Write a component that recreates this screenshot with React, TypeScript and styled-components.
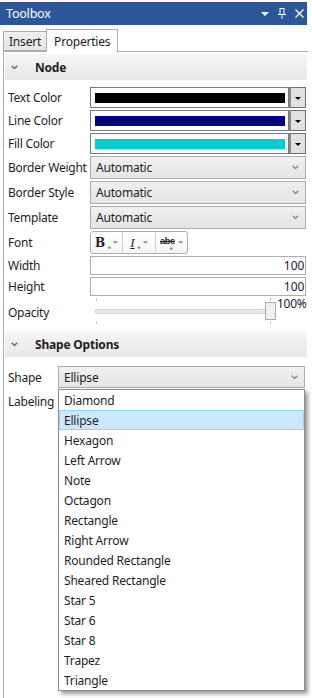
import React from "react";
import styled, { createGlobalStyle } from "styled-components";

const shapes = [
  "Diamond",
  "Ellipse",
  "Hexagon",
  "Left Arrow",
  "Note",
  "Octagon",
  "Rectangle",
  "Right Arrow",
  "Rounded Rectangle",
  "Sheared Rectangle",
  "Star 5",
  "Star 6",
  "Star 8",
  "Trapez",
  "Triangle",
];

const Chevron = ({ color = "#666" }: { color?: string }) => (
  <svg width="7" height="5" viewBox="0 0 7 5">
    <polyline points="0.8,0.8 3.5,3.6 6.2,0.8" fill="none" stroke={color} strokeWidth="1.4" />
  </svg>
);

const DownTriangle = ({ color = "#000", w = 7, h = 4 }: { color?: string; w?: number; h?: number }) => (
  <svg width={w} height={h} viewBox={`0 0 ${w} ${h}`}>
    <polygon points={`0,0 ${w},0 ${w / 2},${h}`} fill={color} />
  </svg>
);

function App() {
  return (
    <>
      <GlobalStyle />
      <Window>
        <TitleBar>
          <Title>Toolbox</Title>
          <TitleButtons>
            <DownTriangle color="#fff" w={8} h={4} />
            <svg width="10" height="11" viewBox="0 0 10 11">
              <rect x="3" y="0.5" width="4" height="6" fill="none" stroke="#fff" strokeWidth="1" />
              <line x1="1" y1="6.5" x2="9" y2="6.5" stroke="#fff" strokeWidth="1" />
              <line x1="5" y1="6.5" x2="5" y2="11" stroke="#fff" strokeWidth="1" />
            </svg>
            <svg width="9" height="9" viewBox="0 0 9 9">
              <line x1="0.5" y1="0.5" x2="8.5" y2="8.5" stroke="#fff" strokeWidth="1.3" />
              <line x1="8.5" y1="0.5" x2="0.5" y2="8.5" stroke="#fff" strokeWidth="1.3" />
            </svg>
          </TitleButtons>
        </TitleBar>

        <TabStrip>
          <Tab>Insert</Tab>
          <Tab $active>Properties</Tab>
        </TabStrip>

        <Content>
          <SectionHeader>
            <Chevron />
            <SectionTitle>Node</SectionTitle>
          </SectionHeader>

          <PropertyGrid $labelWidth={82} $top={7}>
            <Label>Text Color</Label>
            <ColorPicker>
              <SwatchBox>
                <Swatch $color="#000000" />
              </SwatchBox>
              <DropButton>
                <DownTriangle w={6} h={3} />
              </DropButton>
            </ColorPicker>

            <Label>Line Color</Label>
            <ColorPicker>
              <SwatchBox>
                <Swatch $color="#000080" />
              </SwatchBox>
              <DropButton>
                <DownTriangle w={6} h={3} />
              </DropButton>
            </ColorPicker>

            <Label>Fill Color</Label>
            <ColorPicker>
              <SwatchBox>
                <Swatch $color="#00ced1" />
              </SwatchBox>
              <DropButton>
                <DownTriangle w={6} h={3} />
              </DropButton>
            </ColorPicker>

            <Label>Border Weight</Label>
            <Combo $height={23}>
              Automatic
              <Chevron color="#8a8a8a" />
            </Combo>

            <Label>Border Style</Label>
            <Combo $height={23}>
              Automatic
              <Chevron color="#8a8a8a" />
            </Combo>

            <Label>Template</Label>
            <Combo $height={23}>
              Automatic
              <Chevron color="#8a8a8a" />
            </Combo>

            <Label>Font</Label>
            <FontBar>
              <FontGroup>
                <BoldGlyph>
                  B<Star>*</Star>
                </BoldGlyph>
                <DownTriangle color="#9a9a9a" w={5} h={3} />
              </FontGroup>
              <FontGroup>
                <ItalicGlyph>
                  I<Star>*</Star>
                </ItalicGlyph>
                <DownTriangle color="#9a9a9a" w={5} h={3} />
              </FontGroup>
              <FontGroup $last>
                <StrikeGlyph>
                  abc<StrikeStar>*</StrikeStar>
                </StrikeGlyph>
                <DownTriangle color="#9a9a9a" w={5} h={3} />
              </FontGroup>
            </FontBar>

            <Label>Width</Label>
            <NumberBox>100</NumberBox>

            <Label>Height</Label>
            <NumberBox>100</NumberBox>

            <Label>Opacity</Label>
            <SliderRow>
              <Slider>
                <Tick $left={1} $top />
                <Tick $left={175} $top />
                <Track />
                <Thumb />
                <Tick $left={1} />
                <Tick $left={175} />
              </Slider>
              <Percent>100%</Percent>
            </SliderRow>
          </PropertyGrid>

          <SectionHeader $gap={5}>
            <Chevron />
            <SectionTitle>Shape Options</SectionTitle>
          </SectionHeader>

          <PropertyGrid $labelWidth={50} $top={9}>
            <Label>Shape</Label>
            <ComboWrap>
              <Combo $height={22}>
                Ellipse
                <Chevron color="#8a8a8a" />
              </Combo>
              <Popup>
                {shapes.map((s) => (
                  <Item key={s} $selected={s === "Ellipse"}>
                    {s}
                  </Item>
                ))}
              </Popup>
            </ComboWrap>

            <Label>Labeling</Label>
            <Combo $height={22} />
          </PropertyGrid>
        </Content>
      </Window>
    </>
  );
}

const GlobalStyle = createGlobalStyle`
  html, body {
    margin: 0;
    padding: 0;
    background: #ffffff;
  }
  body {
    font-family: "Noto Sans", "Open Sans", sans-serif;
    font-size: 12px;
    color: #1e1e1e;
  }
`;

const Window = styled.div`
  width: 312px;
  height: 698px;
  box-sizing: border-box;
  padding: 2px 4px 0 0;
  display: flex;
  flex-direction: column;
  overflow: hidden;
  background: #ffffff;
`;

const TitleBar = styled.div`
  height: 23px;
  margin-right: 1px;
  background: #2b579a;
  color: #ffffff;
  display: flex;
  align-items: center;
  justify-content: space-between;
  padding: 0 3px 0 6px;
`;

const Title = styled.span`
  font-size: 12.5px;
  letter-spacing: -0.2px;
`;

const TitleButtons = styled.div`
  display: flex;
  align-items: center;
  gap: 8px;
`;

const TabStrip = styled.div`
  height: 26px;
  display: flex;
  align-items: flex-end;
  padding-left: 3px;
  position: relative;
  z-index: 1;
`;

const Tab = styled.div<{ $active?: boolean }>`
  box-sizing: border-box;
  height: ${(p) => (p.$active ? 23 : 20)}px;
  margin-bottom: ${(p) => (p.$active ? -1 : 0)}px;
  padding: 0 ${(p) => (p.$active ? 7 : 5)}px;
  border: 1px solid #acacac;
  border-bottom: ${(p) => (p.$active ? "none" : "1px solid #acacac")};
  border-right: ${(p) => (p.$active ? "1px solid #acacac" : "none")};
  background: ${(p) => (p.$active ? "#ffffff" : "linear-gradient(#f0f0f0, #e5e5e5)")};
  display: flex;
  align-items: center;
  letter-spacing: -0.2px;
  color: #1e1e1e;
`;

const Content = styled.div`
  flex: 1;
  margin-left: 3px;
  padding-top: 2px;
  border-left: 1px solid #acacac;
  border-top: 1px solid #acacac;
  position: relative;
`;

const SectionHeader = styled.div<{ $gap?: number }>`
  height: 26px;
  margin: ${(p) => p.$gap ?? 0}px 1px 0 1px;
  padding-left: 6px;
  display: flex;
  align-items: center;
  background: linear-gradient(#f6f6f6, #e8e8e8);
`;

const SectionTitle = styled.span`
  margin-left: 17px;
  font-weight: 700;
  letter-spacing: -0.2px;
  color: #1e1e1e;
`;

const PropertyGrid = styled.div<{ $labelWidth: number; $top?: number }>`
  display: grid;
  grid-template-columns: ${(p) => p.$labelWidth}px 1fr;
  row-gap: 2px;
  align-items: center;
  padding: ${(p) => p.$top ?? 7}px 3px 0 4px;
`;

const Label = styled.div`
  white-space: nowrap;
  letter-spacing: -0.25px;
  color: #1e1e1e;
`;

const ColorPicker = styled.div`
  height: 21px;
  display: flex;
`;

const SwatchBox = styled.div`
  flex: 1;
  box-sizing: border-box;
  border: 1px solid #7a7a7a;
  background: #ffffff;
  padding: 0 3px 0 4px;
  display: flex;
  align-items: center;
`;

const Swatch = styled.div<{ $color: string }>`
  flex: 1;
  height: 10px;
  background: ${(p) => p.$color};
`;

const DropButton = styled.div`
  width: 17px;
  box-sizing: border-box;
  border: 1px solid #707070;
  border-left: 2px solid #8a8a8a;
  background: #e1e1e1;
  display: flex;
  align-items: center;
  justify-content: center;
  padding-top: 2px;
`;

const Combo = styled.div<{ $height: number }>`
  height: ${(p) => p.$height}px;
  box-sizing: border-box;
  border: 1px solid #acacac;
  background: linear-gradient(#f0f0f0, #e5e5e5);
  padding: 0 6px 0 5px;
  display: flex;
  align-items: center;
  justify-content: space-between;
  letter-spacing: -0.2px;
  color: #1e1e1e;
`;

const ComboWrap = styled.div`
  position: relative;
  z-index: 2;
`;

const Popup = styled.div`
  position: absolute;
  top: calc(100% + 1px);
  left: 0;
  right: 0;
  border: 1px solid #8c8c8c;
  background: #ffffff;
  box-shadow: 3px 3px 4px rgba(0, 0, 0, 0.4);
`;

const Item = styled.div<{ $selected?: boolean }>`
  height: 20px;
  box-sizing: border-box;
  padding-left: ${(p) => (p.$selected ? 4 : 5)}px;
  border: ${(p) => (p.$selected ? "1px solid #99d1ff" : "none")};
  background: ${(p) => (p.$selected ? "#cce8ff" : "transparent")};
  display: flex;
  align-items: center;
  letter-spacing: -0.2px;
  color: #1e1e1e;
`;

const FontBar = styled.div`
  width: 98px;
  height: 23px;
  box-sizing: border-box;
  border: 1px solid #acacac;
  border-radius: 3px;
  background: linear-gradient(#ffffff, #f4f4f4);
  display: flex;
`;

const FontGroup = styled.div<{ $last?: boolean }>`
  flex: 1;
  display: flex;
  align-items: center;
  justify-content: center;
  gap: 3px;
  border-right: ${(p) => (p.$last ? "none" : "1px solid #d0d0d0")};
`;

const Glyph = styled.span`
  position: relative;
  display: inline-block;
  color: #1e1e1e;
  line-height: 1;
`;

const BoldGlyph = styled(Glyph)`
  font-family: "DejaVu Serif", serif;
  font-weight: 700;
  font-size: 12px;
  padding-right: 5px;
`;

const ItalicGlyph = styled(Glyph)`
  font-family: "Liberation Serif", serif;
  font-style: italic;
  font-size: 13px;
  text-decoration: underline;
  padding-right: 5px;
`;

const StrikeGlyph = styled(Glyph)`
  font-family: "Liberation Sans", sans-serif;
  font-weight: 700;
  font-size: 9px;
  text-decoration: line-through;
  letter-spacing: -0.3px;
  padding-bottom: 3px;
`;

const Star = styled.span`
  position: absolute;
  right: -1px;
  top: 70%;
  font-family: "Liberation Sans", sans-serif;
  font-style: normal;
  font-weight: 400;
  font-size: 9px;
  line-height: 1;
  color: #707070;
  text-decoration: none;
`;

const StrikeStar = styled(Star)`
  right: 2px;
  top: 9px;
`;

const NumberBox = styled.div`
  height: 19px;
  box-sizing: border-box;
  border: 1px solid #abadb3;
  background: #ffffff;
  display: flex;
  align-items: center;
  justify-content: flex-end;
  padding-right: 1px;
  color: #1a1a2e;
`;

const SliderRow = styled.div`
  height: 28px;
  display: flex;
`;

const Slider = styled.div`
  position: relative;
  width: 187px;
  height: 28px;
`;

const Track = styled.div`
  position: absolute;
  left: 5px;
  right: 11px;
  top: 11px;
  height: 3px;
  background: #e7eaea;
  border: 1px solid #d6d6d6;
  border-radius: 1px;
`;

const Thumb = styled.div`
  position: absolute;
  left: 175px;
  top: 4px;
  width: 11px;
  height: 18px;
  box-sizing: border-box;
  border: 1px solid #acacac;
  background: #f0f0f0;
`;

const Tick = styled.div<{ $left: number; $top?: boolean }>`
  position: absolute;
  left: ${(p) => p.$left + 5}px;
  top: ${(p) => (p.$top ? 0 : 23)}px;
  width: 1px;
  height: 3px;
  background: #c4c4c4;
`;

const Percent = styled.div`
  margin-top: -3px;
  letter-spacing: -0.3px;
  color: #1a1a2e;
`;

export default App;
